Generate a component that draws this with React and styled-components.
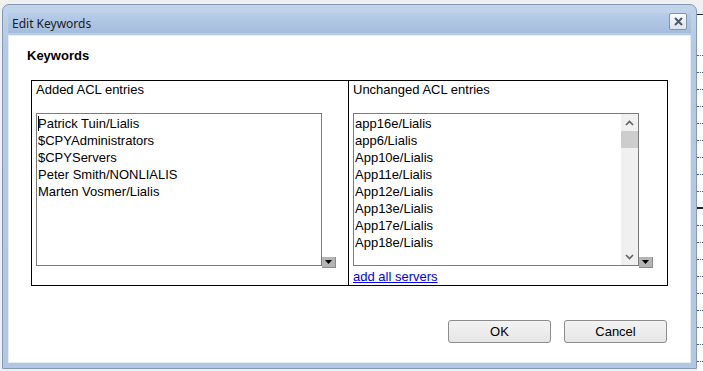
import React from "react";
import styled, { createGlobalStyle } from "styled-components";

const addedEntries = [
  "Patrick Tuin/Lialis",
  "$CPYAdministrators",
  "$CPYServers",
  "Peter Smith/NONLIALIS",
  "Marten Vosmer/Lialis",
];

const unchangedEntries = [
  "app16e/Lialis",
  "app6/Lialis",
  "App10e/Lialis",
  "App11e/Lialis",
  "App12e/Lialis",
  "App13e/Lialis",
  "App17e/Lialis",
  "App18e/Lialis",
];

const GlobalStyle = createGlobalStyle`
  * {
    box-sizing: border-box;
  }

  body {
    margin: 0;
    background: #f0f0f0;
    font-family: "Liberation Sans", Arial, sans-serif;
  }
`;

function App() {
  return (
    <>
      <GlobalStyle />
      <Screen>
        <Window>
          <TitleBar>
            <Title>Edit Keywords</Title>
            <CloseButton type="button" aria-label="Close">
              <svg width="9" height="9" viewBox="0 0 9 9">
                <path d="M1 1 L8 8 M8 1 L1 8" stroke="#4b5870" strokeWidth="2" />
              </svg>
            </CloseButton>
          </TitleBar>

          <Content>
            <Heading>Keywords</Heading>

            <Table>
              <Cell $divider>
                <Label>Added ACL entries</Label>
                <ListRow>
                  <ListBox>
                    <Items>
                      {addedEntries.map((entry, i) => (
                        <Item key={entry}>
                          {i === 0 && <Caret />}
                          {entry}
                        </Item>
                      ))}
                    </Items>
                  </ListBox>
                  <DropButton type="button" aria-label="More">
                    <svg width="7" height="4" viewBox="0 0 7 4">
                      <path d="M0 0 H7 L3.5 4 Z" fill="#000" />
                    </svg>
                  </DropButton>
                </ListRow>
              </Cell>

              <Cell>
                <Label>Unchanged ACL entries</Label>
                <ListRow>
                  <ListBox>
                    <Items>
                      {unchangedEntries.map((entry) => (
                        <Item key={entry}>{entry}</Item>
                      ))}
                    </Items>
                    <ScrollBar>
                      <ScrollArrow>
                        <svg width="9" height="6" viewBox="0 0 9 6">
                          <path d="M1 5 L4.5 1.5 L8 5" stroke="#606060" strokeWidth="1.6" fill="none" />
                        </svg>
                      </ScrollArrow>
                      <Thumb />
                      <Track />
                      <ScrollArrow>
                        <svg width="9" height="6" viewBox="0 0 9 6">
                          <path d="M1 1 L4.5 4.5 L8 1" stroke="#606060" strokeWidth="1.6" fill="none" />
                        </svg>
                      </ScrollArrow>
                    </ScrollBar>
                  </ListBox>
                  <DropButton type="button" aria-label="More">
                    <svg width="7" height="4" viewBox="0 0 7 4">
                      <path d="M0 0 H7 L3.5 4 Z" fill="#000" />
                    </svg>
                  </DropButton>
                </ListRow>
                <Link href="#">add all servers</Link>
              </Cell>
            </Table>

            <Footer>
              <Button type="button">OK</Button>
              <Button type="button">Cancel</Button>
            </Footer>
          </Content>
        </Window>

        <BehindApp>
          <BehindHeader />
          {Array.from({ length: 19 }).map((_, i) => (
            <BehindRow key={i} $solid={i === 9} />
          ))}
        </BehindApp>
      </Screen>
    </>
  );
}

const Screen = styled.div`
  display: flex;
  align-items: flex-start;
  width: 703px;
  height: 371px;
  overflow: hidden;
  background: #f0f0f0;
`;

const Window = styled.div`
  flex: none;
  width: 695px;
  height: 365px;
  margin: 4px 0 0 2px;
  padding: 8px 5px 5px 5px;
  border: 1px solid #8299b8;
  border-radius: 7px 7px 0 0;
  background: linear-gradient(#c1d4ea, #b4c9e3 40px, #b2c7e1);
  display: flex;
  flex-direction: column;
`;

const TitleBar = styled.div`
  height: 20px;
  margin-bottom: 2px;
  display: flex;
  align-items: flex-start;
  justify-content: space-between;
  background: linear-gradient(#b7cde8, #a4bddd);
`;

const Title = styled.span`
  padding: 3px 0 0 4px;
  font-family: "Noto Sans", "DejaVu Sans", sans-serif;
  font-size: 12px;
  line-height: 15px;
  color: #1a1a1a;
`;

const CloseButton = styled.button`
  width: 18px;
  height: 17px;
  margin-right: 4px;
  padding: 0;
  display: flex;
  align-items: center;
  justify-content: center;
  border: 1px solid #8293ab;
  border-radius: 2px;
  background: linear-gradient(#fafbfd, #dde4ee);
`;

const Content = styled.div`
  flex: 1;
  background: #fff;
  padding: 13px 0 0 19px;
  box-shadow: inset 0 0 0 1px #e6ecf3;
`;

const Heading = styled.div`
  height: 16px;
  font-size: 13px;
  font-weight: bold;
  line-height: 16px;
  color: #000;
`;

const Table = styled.div`
  width: 637px;
  height: 206px;
  margin: 16px 0 0 4px;
  border: 1px solid #000;
  display: grid;
  grid-template-columns: 317px 1fr;
`;

const Cell = styled.div`
  padding-left: 4px;
  border-right: ${(p) => (p.$divider ? "1px solid #000" : "none")};
  display: flex;
  flex-direction: column;
  align-items: flex-start;
`;

const Label = styled.div`
  height: 17px;
  margin-bottom: 15px;
  font-size: 13px;
  line-height: 17px;
  color: #000;
`;

const ListRow = styled.div`
  display: flex;
  align-items: flex-end;
`;

const ListBox = styled.div`
  width: 286px;
  height: 153px;
  border: 1px solid #7a7a7a;
  display: flex;
  overflow: hidden;
  background: #fff;
`;

const Items = styled.div`
  flex: 1;
  padding: 1px 0 0 1px;
`;

const Item = styled.div`
  height: 17px;
  font-size: 13px;
  line-height: 17px;
  color: #000;
  white-space: nowrap;
`;

const Caret = styled.span`
  display: inline-block;
  width: 0;
  height: 15px;
  margin-right: -1px;
  border-left: 1px solid #000;
  vertical-align: -3px;
`;

const ScrollBar = styled.div`
  width: 17px;
  background: #f0f0f0;
  display: flex;
  flex-direction: column;
`;

const ScrollArrow = styled.div`
  height: 17px;
  display: flex;
  align-items: center;
  justify-content: center;
`;

const Thumb = styled.div`
  height: 17px;
  background: #cdcdcd;
`;

const Track = styled.div`
  flex: 1;
`;

const DropButton = styled.button`
  width: 14px;
  height: 11px;
  margin-bottom: -2px;
  padding: 0;
  display: flex;
  align-items: center;
  justify-content: center;
  border: none;
  border-right: 1px solid #8a8a8a;
  border-bottom: 1px solid #8a8a8a;
  background: #b4b4b4;
`;

const Link = styled.a`
  margin-top: 3px;
  font-size: 13px;
  line-height: 16px;
  color: #0000ee;
  text-decoration: underline;
`;

const Footer = styled.div`
  width: 640px;
  margin-top: 34px;
  display: flex;
  justify-content: flex-end;
  gap: 13px;
`;

const Button = styled.button`
  width: 103px;
  height: 23px;
  padding: 0;
  border: 1px solid #8c8c8c;
  border-radius: 3px;
  background: linear-gradient(#f3f3f3, #e6e6e6);
  font-family: "Liberation Sans", Arial, sans-serif;
  font-size: 13px;
  color: #000;
`;

const BehindApp = styled.div`
  flex: 1;
  align-self: stretch;
  background: #fff;
  display: flex;
  flex-direction: column;
`;

const BehindHeader = styled.div`
  height: 15px;
  flex: none;
  background: #f0f0f0;
  border-bottom: 1px solid #222;
  margin-bottom: 24px;
`;

const BehindRow = styled.div`
  height: 17px;
  flex: none;
  border-bottom: ${(p) => (p.$solid ? "2px solid #222" : "1px dotted #4a5a8a")};
`;

export default App;
